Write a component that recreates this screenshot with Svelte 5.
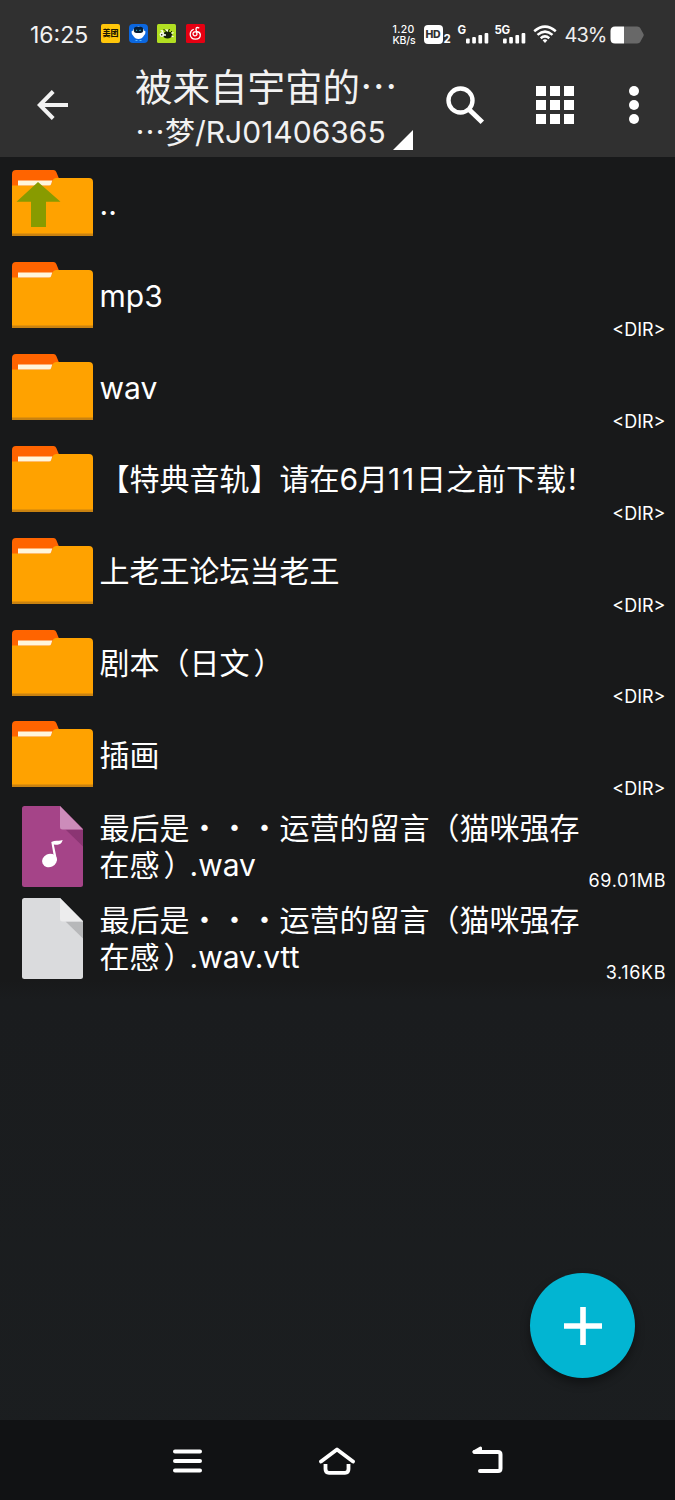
<script>
  const rows = [
    { icon: 'up', name: '..', info: '' },
    { icon: 'folder', name: 'mp3', info: '<DIR>' },
    { icon: 'folder', name: 'wav', info: '<DIR>' },
    { icon: 'folder', name: '【特典音轨】请在6月11日之前下载!', info: '<DIR>' },
    { icon: 'folder', name: '上老王论坛当老王', info: '<DIR>' },
    { icon: 'folder', name: '剧本（日文）', info: '<DIR>' },
    { icon: 'folder', name: '插画', info: '<DIR>' },
    { icon: 'audio', name: '最后是・・・运营的留言（猫咪强存在感）.wav', info: '69.01MB' },
    { icon: 'file', name: '最后是・・・运营的留言（猫咪强存在感）.wav.vtt', info: '3.16KB' }
  ];
  const kinds = { '11': 'digits', '!': 'bang', '）': 'close' };
  const parts = (name) => name.split(/(11|!|）)/).filter(Boolean);
</script>

<div class="screen" lang="zh-CN">
  <header>
    <div class="status">
      <span class="clock">16:25</span>
      <span class="app meituan">美团</span>
      <svg class="app" viewBox="0 0 19 19">
        <rect width="19" height="19" rx="4" fill="#0b67e0" />
        <path d="M2.500 7.500Q4 7 4.500 5Q9.500 0 14.500 5Q15 7 16.500 7.500Q16.500 10.500 15 11.500Q13 15 9.500 15Q6 15 4 11.500Q2.500 10.500 2.500 7.500Z" fill="#fff" />
        <rect x="4.700" y="2.700" width="9.600" height="6.400" rx="3" fill="#061c33" />
        <path d="M7.600 6.800v-1M10.300 6.500q.8-1 1.500 0" stroke="#2ed0e8" stroke-width="1" fill="none" />
        <path d="M6.500 16.500h2M10.500 16.500h2" stroke="#53b8ff" stroke-width="1.200" />
      </svg>
      <svg class="app" viewBox="0 0 19 19">
        <rect width="19" height="19" rx="1.500" fill="#b2df22" />
        <ellipse cx="10.500" cy="11" rx="4.800" ry="3.400" fill="#15200a" />
        <ellipse cx="5" cy="10.600" rx="2.400" ry="2.500" fill="#f4f8e8" />
        <path d="M6.500 5L9.500 8M12.500 5L11 8M15 7L13 9" stroke="#15200a" stroke-width="1" />
        <path d="M3 6.500L7 9L5.500 6Z M8 5.500L11 5.500L10.800 8Z" fill="#fff" />
        <circle cx="4.700" cy="10.700" r=".8" fill="#15200a" />
        <circle cx="8" cy="11" r="1" fill="#fff" />
        <path d="M14.500 9.500l2-1M14.500 12l2 .8" stroke="#fff" stroke-width="1.200" />
      </svg>
      <svg class="app" viewBox="0 0 19 19">
        <rect width="19" height="19" rx="1.500" fill="#e60012" />
        <path d="M12.800 3.800Q10 2.800 10 5.200L11 10.200A2 2 0 1 1 9.500 7.900Q13.500 7 14.300 10.500Q14.500 15 9.500 15.200Q4.200 15 4.200 10Q4.400 6.600 7.300 5.500" fill="none" stroke="#fff" stroke-width="1.300" stroke-linecap="round" />
      </svg>
      <span class="spacer"></span>
      <span class="speed"><span>1.20</span><span>KB/s</span></span>
      <span class="hd"><b>HD</b><i>2</i></span>
      <span class="signal g">
        <b>G</b>
        <svg width="23" height="12" viewBox="0 0 23 12" fill="#fff"><rect y="6.500" width="3.700" height="5" rx="1" /><rect x="6.200" y="5" width="3.700" height="6.500" rx="1" /><rect x="12.400" y="3" width="3.700" height="8.500" rx="1" /><rect x="18.600" y="1" width="3.700" height="10.500" rx="1" /></svg>
      </span>
      <span class="signal g5">
        <b>5G</b>
        <svg width="23" height="12" viewBox="0 0 23 12" fill="#fff"><rect y="6.500" width="3.700" height="5" rx="1" /><rect x="6.200" y="5" width="3.700" height="6.500" rx="1" /><rect x="12.400" y="3" width="3.700" height="8.500" rx="1" /><rect x="18.600" y="1" width="3.700" height="10.500" rx="1" /></svg>
      </span>
      <svg class="wifi" width="24" height="19" viewBox="0 0 24 19" fill="none" stroke="#fff" stroke-width="2.500">
        <path d="M1.200 6.300Q12-3 22.800 6.300" /><path d="M4.500 9.900Q12 3.400 19.500 9.900" /><path d="M7.700 13.200Q12 9.600 16.300 13.200" />
        <path d="M9.600 15.200Q12 13.200 14.400 15.200L12 18Z" fill="#fff" stroke="none" />
      </svg>
      <span class="pct">43%</span>
      <svg width="35" height="18" viewBox="0 0 35 18">
        <path d="M5 .5H27Q30 .5 31 3.500L33.500 8Q34 9 33.500 10L31 14.500Q30 17.500 27 17.500H14V.5Z" fill="#686868" />
        <path d="M5 .5H14V17.500H5Q.5 17.500 .5 13V5Q.5 .5 5 .5Z" fill="#fff" />
      </svg>
    </div>
    <div class="bar">
      <svg class="back" width="32" height="30" viewBox="0 0 32 30" fill="none" stroke="#f2f2f2" stroke-width="4"><path d="M31 15H3M16.200 1.500L2.800 15L16.200 28.500" /></svg>
      <div class="titles">
        <div class="title">被来自宇宙的…</div>
        <div class="path">
          <span>…梦<em>/RJ01406365</em></span>
          <svg width="20" height="20" viewBox="0 0 20 20"><path d="M20 0V20H0Z" fill="#fff" /></svg>
        </div>
      </div>
      <svg class="search" width="39" height="39" viewBox="0 0 39 39" fill="none" stroke="#fff"><circle cx="14.500" cy="14.500" r="12" stroke-width="4.400" /><path d="M23 23.500L36.300 36.300" stroke-width="5" /></svg>
      <svg class="grid" width="38" height="38" viewBox="0 0 38 38" fill="#fff">
        {#each [0, 14, 28] as y}{#each [0, 14, 28] as x}<rect {x} {y} width="10" height="10" />{/each}{/each}
      </svg>
      <svg class="more" width="10" height="38" viewBox="0 0 10 38" fill="#fff"><circle cx="5" cy="5" r="5" /><circle cx="5" cy="19" r="5" /><circle cx="5" cy="33" r="5" /></svg>
    </div>
  </header>

  <main>
    {#each rows as row}
      <div class="row">
        <div class="icon">
          {#if row.icon === 'up' || row.icon === 'folder'}
            <svg width="81" height="66" viewBox="0 0 81 66">
              <path d="M0 20V4Q0 0 4 0H41.500Q43.500 0 44.300 2L48 11V20Z" fill="#ff6400" />
              <path d="M0 15.500H37Q39 15.500 39.600 13.500L40.500 10.500Q41.500 8 44 8H77Q81 8 81 12V66H0Z" fill="#ffa200" />
              <path d="M6 10.500H40.300L39.200 14Q38.700 15.500 37 15.500H6Z" fill="#fff6dc" />
              <path d="M0 63.500H81V66H0Z" fill="#c98210" />
              {#if row.icon === 'up'}<path d="M26 12L48.500 31.700H34V57H19V31.700H4.500Z" fill="#889b00" />{/if}
            </svg>
          {:else}
            <svg width="61" height="81" viewBox="0 0 61 81">
              <path d="M2.500 0H38L61 23V78.500Q61 81 58.500 81H2.500Q0 81 0 78.500V2.500Q0 0 2.500 0Z" fill={row.icon === 'audio' ? '#a54488' : '#dadbdd'} />
              <path d="M43.500 23.500H61V40.500Z" fill={row.icon === 'audio' ? '#8b3573' : '#b7b8ba'} />
              <path d="M38 0L61 23.500H40.500Q38 23.500 38 21Z" fill={row.icon === 'audio' ? '#cc8cba' : '#ececed'} />
              {#if row.icon === 'audio'}
                <ellipse cx="27.500" cy="54.500" rx="7.600" ry="6.600" transform="rotate(-24 27.500 54.500)" fill="#fff" />
                <path d="M32.800 56L29.300 36Q33 34.300 36 34.800Q38 35 40.700 34Q39.500 38.500 35.500 38.700Q33.500 38.700 31.800 38.500L35 54Z" fill="#fff" />
              {/if}
            </svg>
          {/if}
        </div>
        <div class="name">{#each parts(row.name) as part}{#if kinds[part]}<span class={kinds[part]}>{part}</span>{:else}{part}{/if}{/each}</div>
        {#if row.info}<div class="info" class:size={row.info !== '<DIR>'}>{row.info}</div>{/if}
      </div>
    {/each}
    <button class="fab" aria-label="+">
      <svg width="38" height="38" viewBox="0 0 38 38"><path d="M19 0V38M0 19H38" stroke="#fff" stroke-width="5.600" /></svg>
    </button>
  </main>

  <nav>
    <svg width="29" height="24" viewBox="0 0 29 24" stroke="#fff" stroke-width="4" stroke-linecap="round"><path d="M2 2.500H27M2 12H27M2 21.500H27" /></svg>
    <svg width="36" height="28" viewBox="0 0 36 28" fill="none" stroke="#fff" stroke-width="3.800" stroke-linecap="round" stroke-linejoin="round"><path d="M2 14.500L18 2.500L34 14.500" /><path d="M6.500 17V22Q6.500 25.800 10 25.800H26Q29.500 25.800 29.500 22V17" stroke-linecap="butt" /></svg>
    <svg class="return" width="31" height="27" viewBox="0 0 31 27" fill="none" stroke="#fff" stroke-width="4" stroke-linecap="round" stroke-linejoin="round"><path d="M2.500 6H26Q28.500 6 28.500 8.500V22.500Q28.500 25 26 25H8" /><path d="M2 5.700L8.500 2V5.700Z" stroke-width="3" fill="#fff" /></svg>
  </nav>
</div>

<style>
  :global(body) { margin: 0; background: #18191a; }
  .screen {
    width: 675px; height: 1500px; display: flex; flex-direction: column; overflow: hidden;
    background: linear-gradient(#18191a 0, #18191a 980px, #1a1c1e 1000px, #1b1e20);
    color: #fff; font-family: Inter, "Noto Sans CJK SC", sans-serif;
  }
  svg { display: block; flex: none; }
  header { height: 157px; background: #303030; flex: none; }
  .status { height: 35px; padding: 17px 30px 0 30px; display: flex; align-items: center; }
  .clock { width: 71px; font-size: 23px; color: #f2f2f2; }
  .app { width: 19px; height: 19px; margin-right: 9.200px; margin-bottom: 2px; flex: none; }
  .meituan { background: #ffc60a; color: #1c1700; border-radius: 2px; font-size: 8px; font-weight: 900; line-height: 18px; text-align: center; white-space: nowrap; }
  .spacer { flex: 1; }
  .speed { display: flex; flex-direction: column; width: 31px; font-size: 10.500px; font-weight: 500; line-height: 11px; white-space: nowrap; letter-spacing: -.2px; }
  .speed span:first-child { letter-spacing: .3px; }
  .hd { display: flex; align-items: flex-end; width: 34px; }
  .hd b { width: 19px; height: 19px; border-radius: 4px; background: #fff; color: #303030; font-size: 10.500px; line-height: 19px; text-align: center; letter-spacing: -.3px; font-weight: 800; }
  .hd i { font-style: normal; font-weight: 700; font-size: 11.500px; line-height: 10px; margin-left: 1px; }
  .signal { display: flex; align-items: flex-end; height: 19px; }
  .signal b { font-size: 11.500px; line-height: 11px; align-self: flex-start; letter-spacing: -.4px; font-weight: 700; }
  .g { width: 37px; }
  .g b { width: 8px; }
  .g5 { width: 38px; }
  .g5 b { width: 8px; white-space: nowrap; }
  .wifi { margin-right: 8px; }
  .pct { font-size: 20px; letter-spacing: -1px; width: 45.500px; color: #eee; }

  .bar { height: 105px; display: flex; }
  .back { margin: 38px 0 0 37px; }
  .titles { width: 280px; margin-left: 66px; color: #f2f2f2; }
  .title { font-size: 37.500px; line-height: 44px; height: 54px; padding-top: 11px; box-sizing: border-box; white-space: nowrap; font-family: "Noto Sans CJK SC", sans-serif; }
  .path { display: flex; align-items: flex-end; height: 44px; font-size: 30px; line-height: 36px; font-family: "Noto Sans CJK SC", sans-serif; white-space: nowrap; }
  .path span { width: 258px; }
  .path em { font-style: normal; font-family: Inter, sans-serif; }
  .search { margin: 34px 0 0 31px; }
  .grid { margin: 34px 0 0 51px; }
  .more { margin: 34px 0 0 55px; }

  main { flex: 1; position: relative; padding-top: .4px; }
  .row { height: 91.850px; display: grid; grid-template-columns: 87.500px 485px 1fr; padding: 0 9.500px 0 12px; box-sizing: border-box; }
  .icon { align-self: center; width: 81px; display: flex; justify-content: center; }
  .name { align-self: center; font-size: 30px; line-height: 37px; padding-top: 2px; }
  .digits { letter-spacing: 1.700px; }
  .bang { margin-left: 2px; }
  .close { display: inline-block; width: 26px; padding-left: 4px; line-height: 36px; white-space: nowrap; }
  .info { align-self: end; text-align: right; font-size: 18px; line-height: 22px; white-space: nowrap; }
  .size { letter-spacing: .6px; margin-right: -.6px; }
  .fab {
    position: absolute; right: 40px; bottom: 42px; width: 105px; height: 105px; border: 0; border-radius: 50%; padding: 0;
    background: #02b5d2; display: flex; align-items: center; justify-content: center; box-shadow: 0 5px 10px rgba(0, 0, 0, .4);
  }
  nav { height: 80px; flex: none; background: #111214; display: flex; align-items: center; justify-content: space-between; padding: 1px 172px 0 173px; box-sizing: border-box; }
  .return { margin-bottom: 2px; }
</style>
